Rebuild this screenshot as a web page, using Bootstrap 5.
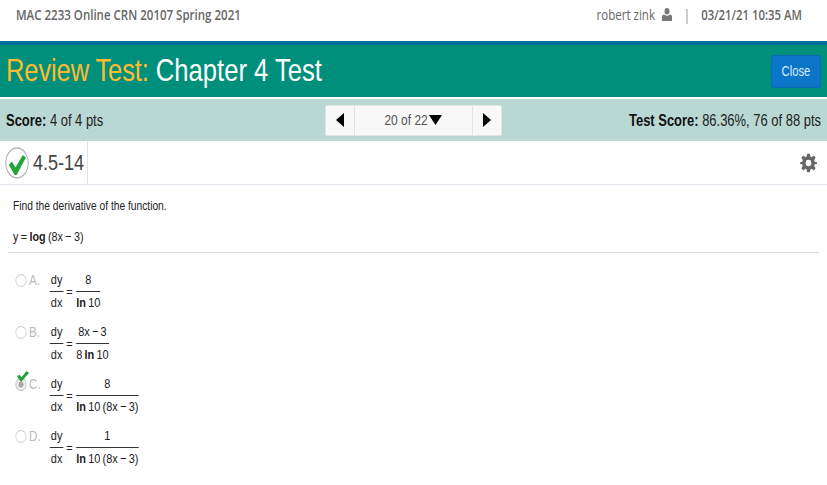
<!DOCTYPE html>
<html lang="en"><head><meta charset="utf-8"><title>Review Test</title>
<link rel="stylesheet" href="https://cdn.jsdelivr.net/npm/bootstrap@5.3.0/dist/css/bootstrap.min.css">
<style>
html,body{height:485px;overflow:hidden;background:#fff}
body{font-family:"Liberation Sans",Arial,sans-serif;color:#222}
.sq,.sqr,.sqc{display:inline-block;white-space:nowrap;transform:scaleX(.8)}
.sq{transform-origin:0 50%}
.sqr{transform-origin:100% 50%}
.sqc{transform-origin:50% 50%}
.topbar{height:41px;padding:0 25px 11px 16px;font-family:"Open Sans",sans-serif;font-size:14.4px;color:#666}
.topbar b{font-weight:600}
.topdate{font-size:14.2px;margin-left:-25px}
.topsep{margin:0 10px 0 11px;color:#888}
.topuser{margin-right:7px}
.stripe{height:56px;background:#008f7a;border-top:4px solid #00719e;padding:0 6px 3px 5.500px}
.rtitle{font-size:32px;color:#fff;line-height:1}
.rtitle span{color:#fdbb30;letter-spacing:-.2px}
.closebtn{background:#0b76c9;border:1px solid #0a6ab5;color:#dcebf7;font-size:14px;width:50px;height:33px;padding:0;border-radius:2px;margin-top:3px}
.scorebar{height:42px;margin-top:2px;background:#bad8d3;padding:0 6px;font-size:16.2px;color:#222;display:grid;grid-template-columns:1fr auto 1fr;align-items:center}
.scorebar b{color:#111}
.pager{height:31px;background:#f8f8f8;border:1px solid #e4e4e4;border-radius:2px}
.pg-arrow{width:28px}
.pg-mid{width:119px;border-left:1px solid #e4e4e4;border-right:1px solid #e4e4e4;font-size:15px;color:#555;gap:1px}
.pg-mid span{margin:0 -5.500px}
.qrow{height:44px;border-bottom:1px solid #dfe3ec}
.qid{width:88px;height:43px;border-right:1px solid #dfe3ec;padding-left:5px;font-size:22.5px;color:#444;gap:4px}
.qid svg{flex:none}
.qgear{margin:12px 10px 0 0}
.qbody{padding:13px 8px 0 8px;font-size:12.8px;color:#222}
.stem{margin:0 0 15px 5px;line-height:16px;display:block}
.eqwrap{padding:0 0 7px 5px;border-bottom:1px solid #d5dbe6;margin-bottom:17px}
.eq{font-size:13.5px;line-height:16px;word-spacing:-.8px;display:block}
.opt{height:52px;display:flex;align-items:flex-start;margin-left:5px;white-space:nowrap}
.lbl{width:47px;flex:none;display:flex;align-items:center;color:#bbb;font-size:14.5px;line-height:20px;padding:0 0 0 3px;position:relative}
.radio-dot{width:14px;height:13px;border:1.5px solid #ccc;border-radius:50%;flex:none;margin-right:3px}
.radio-dot.sel{background:radial-gradient(#aaa 0 3px,#eee 3.5px);border-color:#bbb}
.tick{position:absolute;left:4px;top:-3px}
.mth{display:flex;align-items:flex-start;font-size:13.7px;word-spacing:-1px}
.fr{display:inline-flex;flex-direction:column;align-items:stretch;text-align:center}
.fr i{font-style:normal;display:block}
.fr i:first-child{border-bottom:1px solid #333;height:22px;line-height:20px}
.fr i:last-child{height:22px;line-height:22px}
.eqs{width:17px;text-align:center;line-height:20px;margin-top:12px}
.frd{width:15px;white-space:nowrap}
.frd i{margin:0 -1px}
</style></head><body>
<div class="topbar d-flex align-items-center justify-content-between">
 <b class="sq">MAC 2233 Online CRN 20107 Spring 2021</b>
 <div class="d-flex align-items-center"><span class="sqr topuser">robert zink</span>
  <svg width="10" height="13" viewBox="0 0 13 13" preserveAspectRatio="none"><circle cx="6.500" cy="3.200" r="3.200" fill="#777"/><path d="M0 13V9Q0 6.800 2.500 6.500L6.500 8 10.500 6.500Q13 6.800 13 9V13Z" fill="#777"/></svg>
  <span class="topsep sqc">|</span><b class="sqr topdate">03/21/21 10:35 AM</b></div>
</div>
<div class="stripe d-flex align-items-center justify-content-between">
 <div class="rtitle sq"><span>Review Test:</span> Chapter 4 Test</div>
 <button class="closebtn btn" type="button"><span class="sqc">Close</span></button>
</div>
<div class="scorebar">
 <div><div class="sq"><b>Score:</b> 4 of 4 pts</div></div>
 <div class="pager d-flex align-items-stretch">
  <div class="pg-arrow d-flex align-items-center justify-content-center"><svg width="8" height="14" viewBox="0 0 10 14" preserveAspectRatio="none"><path d="M10 0V14L0 7Z" fill="#000"/></svg></div>
  <div class="pg-mid d-flex align-items-center justify-content-center"><span class="sqc">20 of 22</span><svg width="13" height="10" viewBox="0 0 17 10" preserveAspectRatio="none"><path d="M0 0H17L8.500 10Z" fill="#000"/></svg></div>
  <div class="pg-arrow d-flex align-items-center justify-content-center"><svg width="8" height="14" viewBox="0 0 10 14" preserveAspectRatio="none"><path d="M0 0V14L10 7Z" fill="#000"/></svg></div>
 </div>
 <div class="text-end"><div class="sqr"><b>Test Score:</b> 86.36%, 76 of 88 pts</div></div>
</div>
<div class="qrow d-flex align-items-start justify-content-between">
 <div class="qid d-flex align-items-center">
  <svg width="24" height="32" viewBox="0 0 31 32" preserveAspectRatio="none"><ellipse cx="15.500" cy="16" rx="14.500" ry="15" fill="#fff" stroke="#b5b5b5" stroke-width="1.400"/><path d="M5 18L9 14.500 13.500 20.500 23 8 27 10.500 15 28H12.500Z" fill="#1fa63a"/></svg>
  <span class="sq">4.5-14</span></div>
 <svg class="qgear" width="17" height="20" viewBox="0 0 24 24" preserveAspectRatio="none"><path fill="#666" fill-rule="evenodd" d="M10 1h4l.6 3.200 2 .8L19.300 3l2.800 2.800-2 2.700.8 2 3.100.5v2l-3.100.5-.8 2 2 2.700-2.800 2.800-2.700-2-2 .8L14 23h-4l-.6-3.200-2-.8L4.700 21l-2.800-2.800 2-2.700-.8-2L0 13v-2l3.100-.5.8-2-2-2.700L4.700 3l2.700 2 2-.8ZM12 8a4 4 0 1 0 0 8 4 4 0 0 0 0-8Z"/></svg>
</div>
<div class="qbody">
 <p class="stem sq">Find the derivative of the function.</p>
 <div class="eqwrap"><div class="eq sq">y = <b>log</b> (8x − 3)</div></div>
 <div class="opt sq"><div class="lbl"><span class="radio-dot"></span>A.</div><div class="mth"><span class="fr frd"><i>dy</i><i>dx</i></span><span class="eqs">=</span><span class="fr"><i>8</i><i><b>ln</b> 10</i></span></div></div>
 <div class="opt sq"><div class="lbl"><span class="radio-dot"></span>B.</div><div class="mth"><span class="fr frd"><i>dy</i><i>dx</i></span><span class="eqs">=</span><span class="fr"><i>8x − 3</i><i>8 <b>ln</b> 10</i></span></div></div>
 <div class="opt sq"><div class="lbl"><span class="radio-dot sel"></span>C.<svg class="tick" width="16" height="11" viewBox="0 0 16 11" aria-hidden="true"><path d="M1 5.500 4 3.500 6.500 6.500 13 0 16 2 6 11Z" fill="#1fa63a"/></svg></div><div class="mth"><span class="fr frd"><i>dy</i><i>dx</i></span><span class="eqs">=</span><span class="fr"><i>8</i><i><b>ln</b> 10 (8x − 3)</i></span></div></div>
 <div class="opt sq"><div class="lbl"><span class="radio-dot"></span>D.</div><div class="mth"><span class="fr frd"><i>dy</i><i>dx</i></span><span class="eqs">=</span><span class="fr"><i>1</i><i><b>ln</b> 10 (8x − 3)</i></span></div></div>
</div>
<script src="https://cdn.jsdelivr.net/npm/bootstrap@5.3.0/dist/js/bootstrap.bundle.min.js"></script>
</body></html>
